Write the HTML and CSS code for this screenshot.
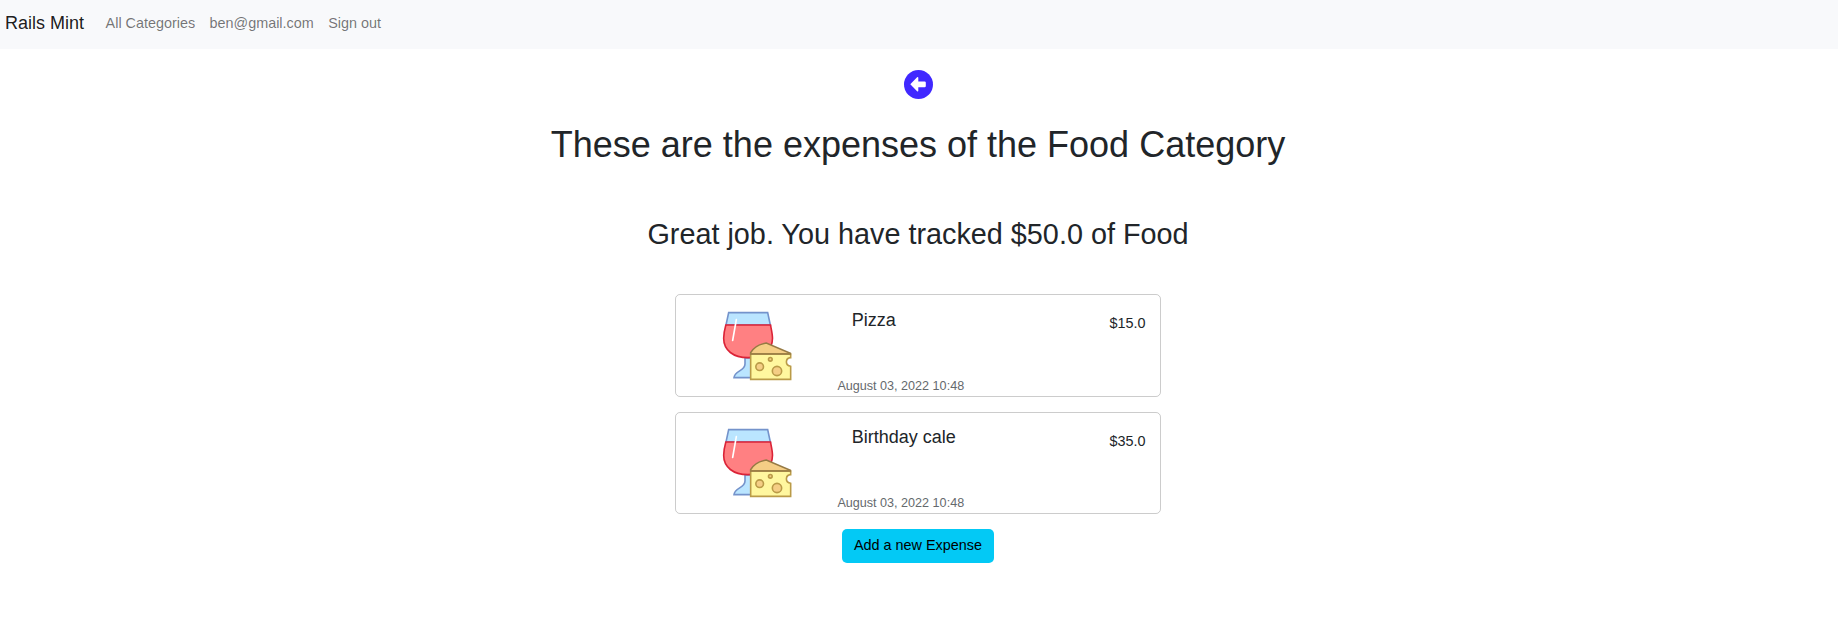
FILE: index.html
```html
<!DOCTYPE html>
<html lang="en">
<head>
<meta charset="utf-8">
<title>Rails Mint</title>
<link rel="stylesheet" href="styles.css">
</head>
<body>
<svg class="sprite" aria-hidden="true">
  <symbol id="food" viewBox="0 0 270 270">
    <path d="M105 174V192C105 214 74 211 72 233H140V174Z" fill="#bae5ff" stroke="#7493cb" stroke-width="4.800"/>
    <path d="M56 38H173L181 75H48Z" fill="#bae5ff" stroke="#7493cb" stroke-width="4.800"/>
    <path d="M47.500 75H181.500C183 84 187.500 101 187.500 115C187.500 151 158 173 114 173C70 173 41 151 41 115C41 101 45 84 47.500 75Z" fill="#ff8082" stroke="#db2337" stroke-width="4.800"/>
    <path d="M79 59L68 121" fill="none" stroke="#fff" stroke-width="5" stroke-linecap="round"/>
    <path d="M122 162V158C132 140 151 132 169 129L241 160V163Z" fill="#f5ce85" stroke="#967a44" stroke-width="4.800"/>
    <path d="M122 162H242V173C226 174 224 196 242 199V238H122Z" fill="#fff79f" stroke="#ba9b48" stroke-width="4.800"/>
    <path d="M120 162H243" stroke="#967a44" stroke-width="4.800"/>
    <g fill="#f5ce85" stroke="#ba9b48" stroke-width="4.800">
      <circle cx="149" cy="200" r="11.500"/>
      <circle cx="201" cy="213" r="14"/>
      <circle cx="181" cy="178" r="5.500"/>
    </g>
  </symbol>
</svg>
<nav class="navbar">
  <a class="brand">Rails Mint</a>
  <a class="nav-link">All Categories</a>
  <a class="nav-link">ben@gmail.com</a>
  <a class="nav-link">Sign out</a>
</nav>
<main class="content">
  <svg class="back" viewBox="0 0 29 29"><circle cx="14.500" cy="14.500" r="14.500" fill="#4028ff"/><path d="M6.300 14.300L13.100 7.300Q14.300 6.500 14.300 8V11.400H20.600Q21.800 11.400 21.800 12.600V16Q21.800 17.200 20.600 17.200H14.300V20.600Q14.300 22.100 13.100 21.300Z" fill="#fff"/></svg>
  <h1 class="title">These are the expenses of the Food Category</h1>
  <h2 class="subtitle">Great job. You have tracked $50.0 of Food</h2>
  <section class="card">
    <svg class="picture"><use href="#food"/></svg>
    <div class="details"><h5 class="name">Pizza</h5><small class="date">August 03, 2022 10:48</small></div>
    <p class="price">$15.0</p>
  </section>
  <section class="card">
    <svg class="picture"><use href="#food"/></svg>
    <div class="details"><h5 class="name">Birthday cale</h5><small class="date">August 03, 2022 10:48</small></div>
    <p class="price">$35.0</p>
  </section>
  <a class="button">Add a new Expense</a>
</main>
</body>
</html>
```
FILE: styles.css
```css
* { box-sizing: border-box; }
body {
  margin: 0;
  background: #fff;
  color: #212529;
  font: 14.4px/21.6px "Liberation Sans", Arial, sans-serif;
}
h1, h2, h5, p { margin: 0; font-weight: 400; }
.sprite { display: none; }
.navbar {
  display: flex;
  align-items: center;
  height: 49px;
  padding: 0 5px;
  background: #f8f9fb;
}
.brand {
  margin-right: 14.4px;
  padding-bottom: 2px;
  font-size: 18px;
  line-height: 27px;
  color: rgba(0, 0, 0, .9);
}
.nav-link {
  padding: 0 7.2px 2px;
  color: rgba(0, 0, 0, .55);
}
.content {
  display: flex;
  flex-direction: column;
  align-items: center;
  padding: 21px 2px 0 0;
}
.back { width: 29px; height: 29px; }
.title {
  margin-top: 24px;
  font-size: 36px;
  line-height: 43px;
}
.subtitle {
  margin-top: 51px;
  font-size: 28.8px;
  line-height: 35px;
}
.card {
  display: flex;
  width: 486px;
  height: 103px;
  margin-bottom: 15px;
  border: 1px solid rgba(0, 0, 0, .2);
  border-radius: 5px;
}
.subtitle + .card { margin-top: 42px; }
.picture {
  flex: none;
  width: 90px;
  height: 90px;
  margin: 5px 0 0 34px;
}
.details {
  display: flex;
  flex-direction: column;
  justify-content: space-between;
  flex: 1;
  padding: 15.4px 0 0 37.4px;
}
.card + .card { height: 102px; }
.card + .card .picture { margin-top: 4px; }
.card + .card .details { padding-top: 14.4px; }
.name {
  padding-left: 14.4px;
  font-size: 18px;
  line-height: 21.6px;
}
.date {
  font-size: 12.6px;
  line-height: 19px;
  color: #65696d;
}
.price { padding: 17.6px 14.4px 0 0; }
.button {
  height: 34px;
  padding: 6.4px 12px 0;
  border-radius: 5px;
  background: #03c9f5;
  color: #000;
}
```
